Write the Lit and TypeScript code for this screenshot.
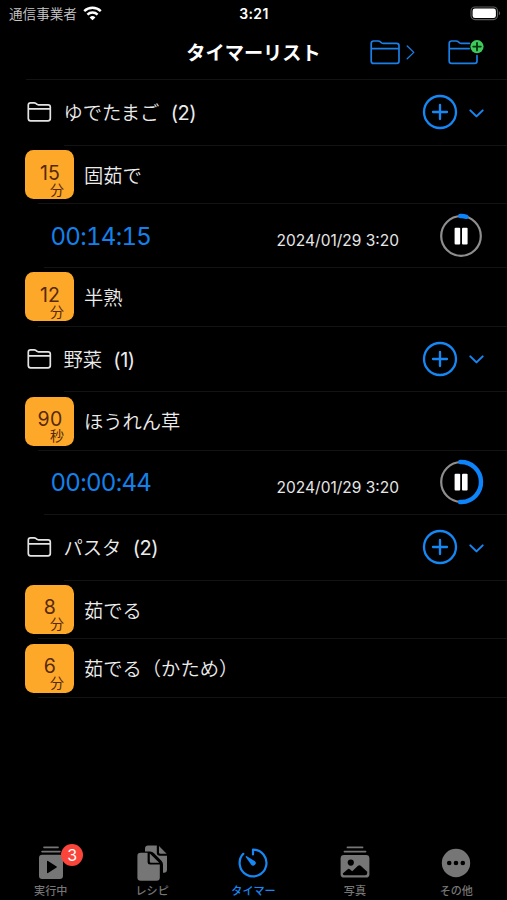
import { LitElement, html, svg, css, nothing } from "lit";
import { customElement, property } from "lit/decorators.js";

interface Timer {
  amount: number;
  unit: string;
  name: string;
  remaining?: string;
  ends?: string;
  progress?: number;
}
interface Group {
  name: string;
  timers: Timer[];
}

const GROUPS: Group[] = [
  {
    name: "ゆでたまご",
    timers: [
      { amount: 15, unit: "分", name: "固茹で", remaining: "00:14:15", ends: "2024/01/29 3:20", progress: 0.05 },
      { amount: 12, unit: "分", name: "半熟" },
    ],
  },
  {
    name: "野菜",
    timers: [{ amount: 90, unit: "秒", name: "ほうれん草", remaining: "00:00:44", ends: "2024/01/29 3:20", progress: 0.51 }],
  },
  {
    name: "パスタ",
    timers: [
      { amount: 8, unit: "分", name: "茹でる" },
      { amount: 6, unit: "分", name: "茹でる（かため）" },
    ],
  },
];

const FONT = css`"Inter", "Noto Sans CJK JP", sans-serif`;

@customElement("status-bar")
class StatusBar extends LitElement {
  static styles = css`
    :host { display: grid; grid-template-columns: 1fr auto 1fr; align-items: center; height: 27px; padding: 0 6px 0 9px; color: #fff; }
    .carrier { display: flex; align-items: center; gap: 6px; font-size: 13.6px; font-weight: 350; line-height: 20px; color: #c8c8c8; }
    .time { font-size: 14px; font-weight: 600; letter-spacing: 0.35px; margin-left: -2px; }
    .battery { justify-self: end; }
    svg { display: block; }
  `;
  render() {
    return html`
      <div class="carrier">
        <span>通信事業者</span>
        <svg width="19" height="15" viewBox="0 0 19 15" fill="none" stroke="#fff" stroke-width="2.4">
          <path d="M1.2 5.2a11.8 11.8 0 0 1 16.6 0" />
          <path d="M4.4 8.6a7.2 7.2 0 0 1 10.2 0" />
          <path d="M9.5 14.3l-2.9-2.9a4.1 4.1 0 0 1 5.8 0z" fill="#fff" stroke="none" />
        </svg>
      </div>
      <div class="time">3:21</div>
      <svg class="battery" width="31" height="15" viewBox="0 0 31 15">
        <rect x="1" y="1" width="26.5" height="12.6" rx="4" fill="none" stroke="#5e5e5e" stroke-width="1.1" />
        <rect x="2.6" y="2.6" width="23.3" height="9.5" rx="2.4" fill="#fff" />
        <path d="M28.9 5.3c1.6.6 1.6 3.4 0 4z" fill="#5e5e5e" />
      </svg>
    `;
  }
}

@customElement("nav-header")
class NavHeader extends LitElement {
  static styles = css`
    :host { display: grid; grid-template-columns: 1fr auto 1fr; align-items: center; height: 52.3px; padding-right: 22px; padding-left: 22px; color: #fff; }
    .title { font-size: 19.2px; font-weight: 700; line-height: 28px; grid-column: 2; }
    .actions { display: flex; justify-content: flex-end; align-items: center; gap: 32px; }
    svg { display: block; }
  `;
  render() {
    return html`
      <div class="title">タイマーリスト</div>
      <div class="actions">
        <svg width="46" height="28" viewBox="0 0 46 28" fill="none" stroke="#1a7fe6" stroke-width="1.7" stroke-linecap="round" stroke-linejoin="round">
          <path d="M1.2 22V4.4Q1.2 2 3.6 2H8.2Q9.3 2 10.1 2.7L11.6 3.9Q12.4 4.4 13.4 4.4H26.6Q29 4.4 29 6.8V22Q29 24.4 26.6 24.4H3.6Q1.2 24.4 1.2 22ZM1.2 9.6H29" />
          <path d="M37.2 7L43.8 13.4L37.2 19.8" stroke-width="1.3" />
        </svg>
        <svg width="37" height="28" viewBox="0 0 37 28" fill="none" stroke="#1a7fe6" stroke-width="1.7" stroke-linecap="round" stroke-linejoin="round">
          <path d="M21.4 4.4H13.4Q12.4 4.4 11.6 3.9L10.1 2.7Q9.3 2 8.2 2H3.6Q1.2 2 1.2 4.4V22Q1.2 24.4 3.6 24.4H26.6Q29 24.4 29 22V16.5M1.2 9.6H21.2" />
          <circle cx="29" cy="7.6" r="6.6" fill="#3dcc5b" stroke="none" />
          <path d="M29 3.8V11.4M25.2 7.6H32.8" stroke="#04330d" stroke-width="1.8" />
        </svg>
      </div>
    `;
  }
}

@customElement("group-row")
class GroupRow extends LitElement {
  @property() name = "";
  @property({ type: Number }) count = 0;
  static styles = css`
    :host { display: flex; align-items: center; height: 65.9px; padding: 0 22px 0 26px; color: #ececec; }
    .name { margin: 2px 0 0 11.5px; font-size: 19.3px; font-weight: 350; line-height: 28px; }
    .count { margin: 2px 0 0 11.3px; font-size: 20px; line-height: 28px; flex: 1; letter-spacing: -0.5px; }
    .add { margin-right: 10px; }
    svg { display: block; }
  `;
  render() {
    return html`
      <svg width="26" height="22" viewBox="0 0 26 22" fill="none" stroke="#e4e4e4" stroke-width="1.7" stroke-linejoin="round">
        <path d="M2.3 17.6V4.1Q2.3 1.8 4.6 1.8H8.2Q9.1 1.8 9.8 2.4L10.7 3.2Q11.4 3.8 12.4 3.8H22Q24.3 3.8 24.3 6.1V17.6Q24.3 19.9 22 19.9H4.6Q2.3 19.9 2.3 17.6ZM2.3 7.8H24.3" />
      </svg>
      <span class="name">${this.name}</span>
      <span class="count">(${this.count})</span>
      <svg class="add" width="36" height="36" viewBox="0 0 36 36" fill="none" stroke="#1688f5" stroke-width="2.3" stroke-linecap="round">
        <circle cx="18" cy="18" r="16" />
        <path d="M18 11V25M11 18H25" />
      </svg>
      <svg width="17" height="11" viewBox="0 0 17 11" fill="none" stroke="#1688f5" stroke-width="2" stroke-linecap="round" stroke-linejoin="round">
        <path d="M2.3 3.4L8.5 9.4L14.7 3.4" />
      </svg>
    `;
  }
}

@customElement("timer-row")
class TimerRow extends LitElement {
  @property({ attribute: false }) timer!: Timer;
  static styles = css`
    :host { display: flex; align-items: center; box-sizing: border-box; height: 58.5px; padding: 0.6px 0 0 25px; color: #ececec; }
    .tile { display: grid; grid-template-rows: 19px 14px; box-sizing: border-box; width: 49px; height: 49px; padding-top: 12.4px; border-radius: 8.5px; background: #fda829; color: #56290a; }
    .amount { text-align: center; font-size: 19.5px; line-height: 20px; letter-spacing: 0.2px; padding-left: 1px; }
    .unit { justify-self: end; margin-right: 10px; font-family: "Noto Sans CJK JP", sans-serif; font-size: 14px; line-height: 14px; }
    .name { margin: 2px 0 0 10px; font-size: 19.3px; font-weight: 350; line-height: 28px; }
  `;
  render() {
    return html`
      <div class="tile">
        <span class="amount">${this.timer.amount}</span>
        <span class="unit">${this.timer.unit}</span>
      </div>
      <span class="name">${this.timer.name}</span>
    `;
  }
}

@customElement("running-row")
class RunningRow extends LitElement {
  @property({ attribute: false }) timer!: Timer;
  static styles = css`
    :host { display: flex; align-items: center; height: 63.7px; padding: 0 23.5px 0 50.5px; color: #e6e6e6; }
    .remaining { flex: 1; margin-top: 2px; font-size: 24px; line-height: 30px; letter-spacing: -0.7px; font-variant-numeric: tabular-nums; color: #1481ea; }
    .ends { margin: 11px 38.5px 0 0; font-size: 15.5px; line-height: 20px; }
    svg { display: block; }
  `;
  render() {
    const length = 2 * Math.PI * 20;
    const done = length * (this.timer.progress ?? 0);
    return html`
      <span class="remaining">${this.timer.remaining}</span>
      <span class="ends">${this.timer.ends}</span>
      <svg width="46" height="46" viewBox="0 0 46 46" fill="none">
        <circle cx="23" cy="23" r="19.8" stroke="#8e8e8e" stroke-width="2.2" />
        <circle cx="23" cy="23" r="20" stroke="#0d84fb" stroke-width="4.4" stroke-dasharray="${done} ${length}" transform="rotate(-92 23 23)" stroke-linecap="round" />
        <rect x="16.6" y="14.8" width="5.6" height="16.8" rx="1" fill="#fff" />
        <rect x="24" y="14.8" width="5.6" height="16.8" rx="1" fill="#fff" />
      </svg>
    `;
  }
}

const ICONS = {
  running: svg`
    <path d="M10 3.4H24M8 7.6H26" stroke="currentColor" stroke-width="1.6" stroke-linecap="round" />
    <path fill="currentColor" fill-rule="evenodd" d="M8.2 10.8H25.8Q29 10.8 29 14V31.8Q29 35 25.8 35H8.2Q5 35 5 31.8V14Q5 10.8 8.2 10.8ZM13 17.4V28.4Q13 29.5 14 29L22.6 23.6Q23.4 23 22.6 22.4L14 16.9Q13 16.4 13 17.4Z" />`,
  recipe: svg`
    <path fill="currentColor" d="M13.2 1.6H21.8V8.8Q21.8 11.8 24.8 11.8H32V25.6Q32 28.8 28.8 28.8H28V20.5Q28 18.3 26.4 16.7L19 9.2Q17.4 7.6 15.2 7.6H10V4.8Q10 1.6 13.2 1.6Z" />
    <path fill="currentColor" d="M24 2L31.6 9.8H25.4Q24 9.8 24 8.4Z" />
    <path fill="currentColor" d="M5.6 8.8H12.6V18.2Q12.6 20.6 15 20.6H24.8V33.6Q24.8 36.8 21.6 36.8H5.6Q2.4 36.8 2.4 33.6V12Q2.4 8.8 5.6 8.8Z" />
    <path fill="currentColor" d="M14.8 9.6L24.2 18.8H16.2Q14.8 18.8 14.8 17.4Z" />`,
  timer: svg`
    <path d="M17 5.6V10.4M17 5.6A13.4 13.4 0 1 1 7.3 9.8" fill="none" stroke="currentColor" stroke-width="2.2" stroke-linecap="round" stroke-linejoin="round" />
    <path fill="currentColor" d="M9.7 12.9Q9.6 11.8 10.8 12.2L18.6 17.1A2.5 2.5 0 1 1 15.2 20.7Z" />`,
  photo: svg`
    <path d="M9.5 3.4H24.5M6.5 7.6H27.5" stroke="currentColor" stroke-width="1.8" stroke-linecap="round" />
    <rect x="2.6" y="11" width="28.8" height="22.6" rx="3.4" fill="currentColor" />
    <circle cx="12.8" cy="18.6" r="3.1" fill="#000" />
    <path fill="#000" d="M4.8 29.4L9.7 25.2Q10.8 24.4 11.8 25.3L14.2 27.3L20 21.8Q21.4 20.6 22.7 21.8L29.2 27.8V29.2Q29.2 31.3 27 31.3H6.9Q4.8 31.3 4.8 29.4Z" />`,
  more: svg`
    <circle cx="17" cy="19" r="14.2" fill="currentColor" />
    <g fill="#000"><circle cx="10.2" cy="19" r="2.3" /><circle cx="17" cy="19" r="2.3" /><circle cx="23.8" cy="19" r="2.3" /></g>`,
};

const TABS = [
  { label: "実行中", icon: ICONS.running, badge: 3 },
  { label: "レシピ", icon: ICONS.recipe },
  { label: "タイマー", icon: ICONS.timer, active: true },
  { label: "写真", icon: ICONS.photo },
  { label: "その他", icon: ICONS.more },
];

@customElement("tab-bar")
class TabBar extends LitElement {
  static styles = css`
    :host { display: grid; grid-template-columns: repeat(5, 1fr); height: 56px; }
    .tab { position: relative; display: flex; flex-direction: column; align-items: center; color: #767676; font-size: 11.1px; font-weight: 500; line-height: 14px; gap: 2px; }
    .tab.active { color: #1688f5; }
    .badge { position: absolute; top: 0; left: calc(50% + 10.5px); width: 22px; height: 22px; border-radius: 50%; background: #fb453b; color: #fff; font-size: 16px; font-weight: 400; line-height: 22px; text-align: center; }
    svg { display: block; }
  `;
  render() {
    return html`${TABS.map(
      (t) => html`<div class="tab ${t.active ? "active" : ""}">
        <svg width="34" height="38" viewBox="0 0 34 38">${t.icon}</svg>
        <span>${t.label}</span>
        ${t.badge ? html`<span class="badge">${t.badge}</span>` : nothing}
      </div>`
    )}`;
  }
}

@customElement("app-root")
class AppRoot extends LitElement {
  static styles = css`
    :host { display: flex; flex-direction: column; height: 900px; background: #000; font-family: ${FONT}; overflow: hidden; }
    main { flex: 1; }
    .line { height: 1px; margin: -0.4px 0 -0.6px 44px; background: #131313; }
    .line.top { margin-left: 26px; }
    .line.group { margin-left: 64px; }
    .line.item { margin-left: 38px; }
  `;
  render() {
    return html`
      <status-bar></status-bar>
      <nav-header></nav-header>
      <main>
        <div class="line top"></div>
        ${GROUPS.map(
          (g) => html`
            <group-row .name=${g.name} .count=${g.timers.length}></group-row>
            <div class="line group"></div>
            ${g.timers.map(
              (t) => html`
                <timer-row .timer=${t}></timer-row>
                <div class="line item"></div>
                ${t.remaining
                  ? html`<running-row .timer=${t}></running-row>
                      <div class="line"></div>`
                  : nothing}
              `
            )}
          `
        )}
      </main>
      <tab-bar></tab-bar>
    `;
  }
}
